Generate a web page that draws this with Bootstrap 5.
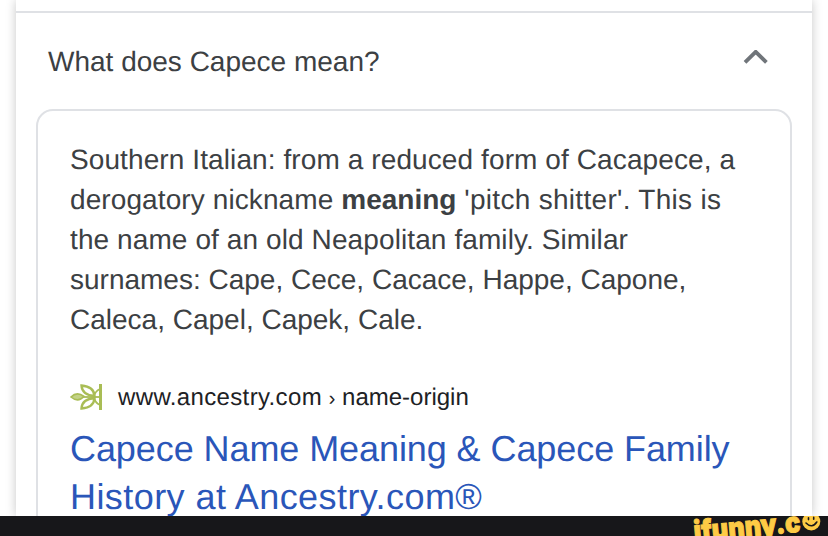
<!DOCTYPE html>
<html lang="en">
<head>
    <meta charset="UTF-8">
    <meta name="viewport" content="width=device-width, initial-scale=1.0">
    <title>What does Capece mean?</title>
    <link href="https://cdn.jsdelivr.net/npm/bootstrap@5.3.0/dist/css/bootstrap.min.css" rel="stylesheet">
    <style>
        body{
            font-family: "Liberation Sans", Arial, sans-serif;
            color: #3c4043;
            background: #fff;
            text-rendering: geometricPrecision;
        }
        .results{
            height: 516px;
            padding: 0 16px;
        }
        .panel{
            box-shadow: 0 0 10px rgba(0, 0, 0, .22);
            padding-top: 11px;
        }
        .question{
            border-top: 2px solid #dfe1e5;
            height: 98px;
            padding: 2px 44px 0 32px;
            font-size: 28px;
        }
        .answer{
            height: 430px;
            margin: 0 20px;
            padding: 29px 32px 0;
            border: 2px solid #dfe1e5;
            border-radius: 17px;
        }
        .snippet{
            font-size: 28px;
            line-height: 40px;
            letter-spacing: .1px;
        }
        .source{
            margin-top: 37px;
            height: 40px;
            gap: 16px;
            font-size: 24px;
            color: #202124;
        }
        .address{
            padding-top: 2px;
        }
        .domain{
            letter-spacing: .36px;
        }
        .crumb{
            font-size: 20px;
        }
        .result-link{
            margin-top: 8px;
            font-size: 36px;
            line-height: 48px;
            letter-spacing: -.08px;
            color: #2a56b9;
        }
        .tight{
            letter-spacing: 0;
        }
        .loose{
            letter-spacing: .3px;
        }
        .looser{
            letter-spacing: .43px;
        }
        .footer-bar{
            height: 20px;
            background: #17171a;
        }
        .logo-text{
            font: 900 28px Inter, "Open Sans", sans-serif;
        }
    </style>
</head>
<body class="overflow-hidden">
    <main class="results overflow-hidden">
        <div class="panel bg-white h-100">
            <div class="question d-flex justify-content-between align-items-center text-nowrap">
                <span>What does Capece mean?</span>
                <svg width="25" height="16" viewBox="0 0 25 16" class="mb-2" fill="none" stroke="#70757a" stroke-width="3.8">
                    <path d="M2 12.4 12.7 1.8 23.4 12.4"/>
                </svg>
            </div>
            <div class="answer text-nowrap">
                <p class="snippet mb-0">
                    Southern Italian: from a reduced form of Cacapece, a<br>
                    derogatory nickname <b class="tight">meaning</b> <span class="loose">'pitch shitter'. This is</span><br>
                    the name of an old Neapolitan family. Similar<br>
                    <span class="tight">surnames: Cape, Cece, Cacace, Happe, Capone,</span><br>
                    <span class="tight">Caleca, Capel, Capek, Cale.</span>
                </p>
                <div class="source d-flex align-items-center">
                    <svg width="32" height="28" viewBox="0 0 32 28" fill="none" stroke="#a9bd55" stroke-width="2.4">
                        <path d="M1 14Q7 8 14 13.5Q8 20 1 14Z" fill="#c3d287" stroke-width="1.6"/>
                        <path d="M11.5 2.5Q24 3.5 24.5 13Q12 12 11.5 2.5Z"/>
                        <path d="M11.5 25.5Q24 24.5 24.5 15Q12 16 11.5 25.5Z"/>
                        <path d="M30 6Q25 8 24 14Q25 20 30 22" stroke-width="1.6"/>
                        <path d="M13 14H30" stroke-width="1.8"/>
                        <path d="M30.5 1V27" stroke-width="3"/>
                    </svg>
                    <span class="address"><span class="domain">www.ancestry.com</span> <span class="crumb">›</span> name-origin</span>
                </div>
                <a href="#" class="result-link d-block text-decoration-none">
                    Capece Name Meaning &amp; Capece Family<br>
                    <span class="looser">History at Ancestry.com®</span>
                </a>
            </div>
        </div>
    </main>
    <footer class="footer-bar d-flex justify-content-end overflow-hidden">
        <svg width="138" height="20" viewBox="690 516 138 20">
            <text class="logo-text" transform="translate(694.5 541) rotate(-5)" textLength="107" lengthAdjust="spacingAndGlyphs" fill="#fecb45" stroke="#fecb45" stroke-width="1">ifunny.c</text>
            <circle cx="811.3" cy="521.5" r="9" fill="#fecb45"/>
            <g fill="none" stroke="#17171a" stroke-width="1.6" stroke-linecap="round">
                <path d="M808.5 517.8v1.8M813.7 517.4v1.8M806 523q6 6 10.8-1"/>
            </g>
        </svg>
    </footer>
    <script src="https://cdn.jsdelivr.net/npm/bootstrap@5.3.0/dist/js/bootstrap.bundle.min.js"></script>
</body>
</html>
